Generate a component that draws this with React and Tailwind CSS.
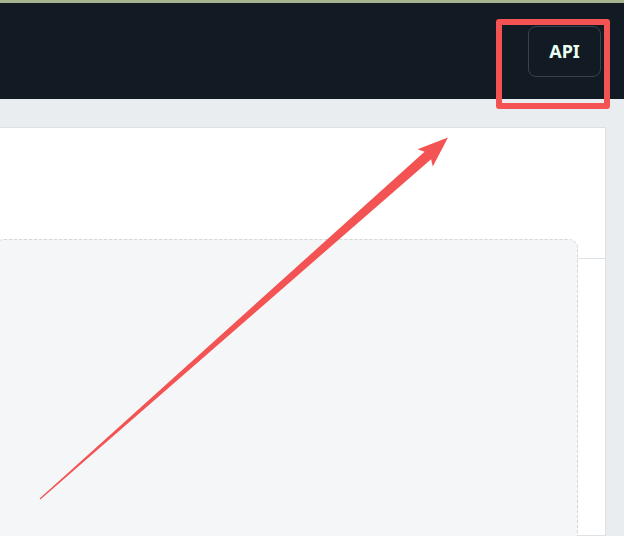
export default function App() {
  return (
    <div className="relative w-[624px] h-[536px] overflow-hidden flex flex-col bg-[#e9edef]" style={{ fontFamily: '"Noto Sans", "Open Sans", sans-serif' }}>
      <div className="h-[3px] bg-[#a5b592]" />
      <div className="h-[96px] bg-[#121b23] flex items-center justify-end pr-[23px]">
        <div className="w-[73px] h-[51px] rounded-[8px] border border-[#3a434b] flex items-center justify-center text-[18px] font-bold text-[#e9fff3] leading-none">
          API
        </div>
      </div>
      <div className="flex-1 pt-[28px] pr-[18px] flex flex-col">
        <div className="flex-1 ml-[-2px] bg-white border border-[#dde1e4] flex flex-col">
          <div className="h-[131px] border-b border-[#dde1e4] shrink-0" />
          <div className="mt-[-20px] mr-[27px] ml-[-4px] flex-1 mb-[-20px] bg-[#f5f6f8] border border-dashed border-[#d3d7db] rounded-[9px]" />
        </div>
      </div>

      <div className="absolute left-[496px] top-[19px] w-[114px] h-[90px] border-[6px] border-[#f35353] rounded-[3px]" />
      <svg className="absolute left-0 top-0" width="624" height="536" viewBox="0 0 624 536">
        <polygon
          fill="#f35353"
          points="39.6,498.55 424.5,151.7 417.6,149.2 448,137.5 432.8,166.4 431.1,159.2 40.4,499.45"
        />
      </svg>
    </div>
  );
}
